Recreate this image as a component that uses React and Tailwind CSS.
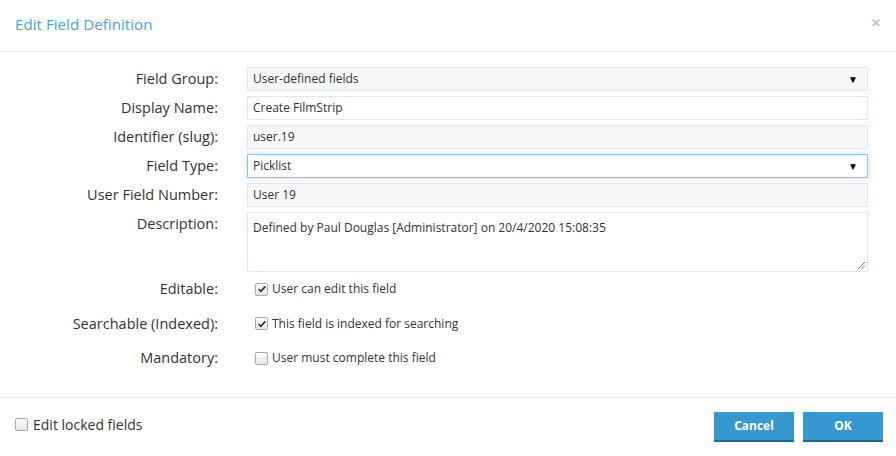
import { useState } from "react";

const font = { fontFamily: '"Open Sans", "Liberation Sans", sans-serif' };

function Check({ checked, onClick }) {
  return (
    <span
      onClick={onClick}
      className="flex h-[13px] w-[13px] shrink-0 items-center justify-center rounded-[2px] border border-[#a9a9a9] bg-gradient-to-b from-[#fdfdfd] to-[#e6e6e6]"
    >
      {checked && (
        <svg viewBox="0 0 12 12" className="h-[10px] w-[10px]">
          <path d="M2 6.2 L4.6 8.8 L10 2.8" fill="none" stroke="#333" strokeWidth="2" />
        </svg>
      )}
    </span>
  );
}

function Row({ label, children, top }) {
  return (
    <div className={`flex ${top ? "items-start" : "items-center"}`}>
      <div className={`w-[218px] shrink-0 text-right text-[14.5px] text-[#333] ${top ? "pt-[1px]" : ""}`}>{label}</div>
      <div className="ml-[29px] w-[621px]">{children}</div>
    </div>
  );
}

function Box({ children, grey, focus, arrow }) {
  return (
    <div
      className={`flex h-[24px] items-center justify-between border px-[5px] text-[12px] text-[#333] ${
        focus
          ? "border-[#8dc5ea] bg-white shadow-[0_0_6px_rgba(102,175,233,0.35)]"
          : grey
          ? "border-[#dde8f0] border-t-[#e2e4e6] bg-[#f8f8f8]"
          : "border-[#dde8f0] bg-white"
      }`}
    >
      <span>{children}</span>
      {arrow && <span className="pr-[4px] text-[10px] text-black">▼</span>}
    </div>
  );
}

export default function App() {
  const [editable, setEditable] = useState(true);
  const [indexed, setIndexed] = useState(true);
  const [mandatory, setMandatory] = useState(false);
  const [locked, setLocked] = useState(false);

  const checks = [
    ["Editable:", "User can edit this field", editable, setEditable],
    ["Searchable (Indexed):", "This field is indexed for searching", indexed, setIndexed],
    ["Mandatory:", "User must complete this field", mandatory, setMandatory],
  ];

  return (
    <div style={font} className="h-[456px] w-[896px] overflow-hidden bg-white">
      <div className="flex h-[52px] items-center justify-between border-b border-[#e5e5e5] pl-[15px] pr-[15px]">
        <h1 className="pb-[2px] text-[15.2px] text-[#4aa3d9]">Edit Field Definition</h1>
        <span className="pb-[8px] text-[18px] font-bold leading-none text-[#c8c8c8]">×</span>
      </div>

      <div className="flex h-[345px] flex-col gap-[5px] pt-[15px]">
        <Row label="Field Group:">
          <Box grey arrow>User-defined fields</Box>
        </Row>
        <Row label="Display Name:">
          <Box>Create FilmStrip</Box>
        </Row>
        <Row label="Identifier (slug):">
          <Box grey>user.19</Box>
        </Row>
        <Row label="Field Type:">
          <Box focus arrow>Picklist</Box>
        </Row>
        <Row label="User Field Number:">
          <Box grey>User 19</Box>
        </Row>
        <Row label="Description:" top>
          <div className="relative h-[60px] border border-[#dde8f0] px-[5px] pt-[6px] text-[12px] text-[#333]">
            Defined by Paul Douglas [Administrator] on 20/4/2020 15:08:35
            <svg viewBox="0 0 10 10" className="absolute bottom-[1px] right-[1px] h-[10px] w-[10px]">
              <path d="M9 2 L2 9 M9 5.5 L5.5 9" stroke="#777" strokeWidth="1" />
            </svg>
          </div>
        </Row>
        <div className="mt-[-5px] flex flex-col">
          {checks.map(([label, text, val, set]) => (
            <div key={label} className="flex h-[34.5px] items-center">
              <div className="w-[218px] shrink-0 text-right text-[14.5px] text-[#333]">{label}</div>
              <div className="ml-[37px] flex items-center gap-[4px] text-[12px] text-[#333]">
                <Check checked={val} onClick={() => set(!val)} />
                <span>{text}</span>
              </div>
            </div>
          ))}
        </div>
      </div>

      <div className="flex h-[59px] items-center justify-between border-t border-[#e5e5e5] pl-[15px] pr-[13px]">
        <label className="mb-[6px] flex items-center gap-[5px] text-[14px] text-[#333]">
          <Check checked={locked} onClick={() => setLocked(!locked)} />
          <span>Edit locked fields</span>
        </label>
        <div className="flex gap-[9px]">
          <button className="h-[30px] w-[80px] border-b-2 border-[#1c6a96] bg-[#3798cf] text-[12px] font-bold text-white">
            Cancel
          </button>
          <button className="h-[30px] w-[80px] border-b-2 border-[#1c6a96] bg-[#3798cf] text-[12px] font-bold text-white">
            OK
          </button>
        </div>
      </div>
    </div>
  );
}
